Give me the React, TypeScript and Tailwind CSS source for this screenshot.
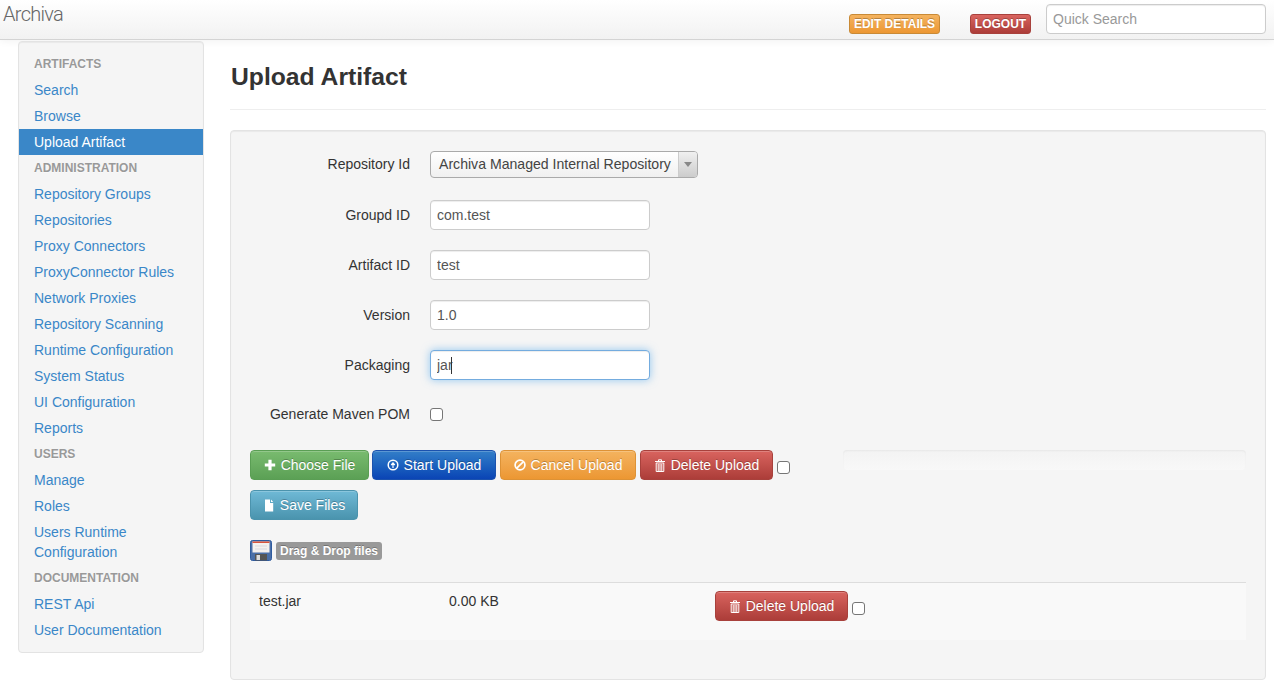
import React from "react";

type NavEntry = { h?: string; l?: string; active?: boolean };
const nav: NavEntry[] = [
  { h: "ARTIFACTS" },
  { l: "Search" },
  { l: "Browse" },
  { l: "Upload Artifact", active: true },
  { h: "ADMINISTRATION" },
  { l: "Repository Groups" },
  { l: "Repositories" },
  { l: "Proxy Connectors" },
  { l: "ProxyConnector Rules" },
  { l: "Network Proxies" },
  { l: "Repository Scanning" },
  { l: "Runtime Configuration" },
  { l: "System Status" },
  { l: "UI Configuration" },
  { l: "Reports" },
  { h: "USERS" },
  { l: "Manage" },
  { l: "Roles" },
  { l: "Users Runtime Configuration" },
  { h: "DOCUMENTATION" },
  { l: "REST Api" },
  { l: "User Documentation" },
];

const Plus = () => (
  <svg width="12" height="12" viewBox="0 0 12 12" fill="#fff"><path d="M4.4 .8h3.2v3.6h3.6v3.2H7.6v3.6H4.4V7.6H.8V4.4h3.6z" /></svg>
);
const Upload = () => (
  <svg width="12" height="12" viewBox="0 0 12 12" fill="none" stroke="#fff"><circle cx="6" cy="6" r="4.8" strokeWidth="1.5" /><path d="M6 9V4.2M4.2 6L6 4l1.8 2" strokeWidth="1.2" /></svg>
);
const Ban = () => (
  <svg width="12" height="12" viewBox="0 0 12 12" fill="none" stroke="#fff" strokeWidth="1.7"><circle cx="6" cy="6" r="4.9" /><path d="M2.8 9.2l6.4-6.4" /></svg>
);
const Trash = () => (
  <svg width="12" height="13" viewBox="0 0 12 13" fill="none" stroke="#fff" strokeWidth="1"><path d="M1 2.5h10M4.5 2V.8h3V2" /><path d="M2.2 4h7.6v8.5H2.2zM4.2 5v7M6 5v7M7.8 5v7" /></svg>
);
const FileIcon = () => (
  <svg width="12" height="13" viewBox="0 0 12 13" fill="#fff"><path d="M2 .5h5v3.5h3.2v8.5H2zM8 .5l2.2 2.6H8z" /></svg>
);

function Btn({ icon, label, cls }: { icon: React.ReactNode; label: string; cls: string }) {
  return (
    <button className={`flex items-center justify-center h-[30px] gap-[5px] rounded-[4px] border text-[14px] text-white [text-shadow:0_-1px_0_rgba(0,0,0,0.25)] shadow-[inset_0_1px_0_rgba(255,255,255,0.2)] ${cls}`}>
      {icon}
      <span>{label}</span>
    </button>
  );
}
const red = "w-[133px] bg-gradient-to-b from-[#d9645f] to-[#ac3d39] border-[#a8413c]";

function Check({ cls = "" }: { cls?: string }) {
  return <span className={`block w-[13px] h-[13px] bg-white rounded-[3px] border border-[#767676] ${cls}`} />;
}

function Field({ label, value, focus }: { label: string; value: string; focus?: boolean }) {
  return (
    <div className="flex items-center h-[30px] mb-[20px]">
      <label className="w-[160px] text-right text-[14px] text-[#333]">{label}</label>
      <div className="relative ml-[20px]">
        <input
          readOnly
          value={value}
          className={`block w-[220px] h-[30px] px-[6px] rounded-[4px] border bg-white text-[14px] text-[#555] outline-none ${
            focus
              ? "border-[#74acdf] shadow-[inset_0_1px_1px_rgba(0,0,0,0.075),0_0_8px_rgba(82,168,236,0.6)]"
              : "border-[#ccc] shadow-[inset_0_1px_1px_rgba(0,0,0,0.075)]"
          }`}
        />
        {focus && <span className="absolute left-[21px] top-[7px] w-px h-[17px] bg-[#333]" />}
      </div>
    </div>
  );
}

export default function App() {
  return (
    <div className="w-[1274px] h-[689px] overflow-hidden bg-white text-[#333] text-[14px] font-['Liberation_Sans',Arial,sans-serif]">
      <header className="flex items-start h-[40px] border-b border-[#d4d4d4] bg-gradient-to-b from-white to-[#f2f2f2] shadow-[0_1px_8px_rgba(0,0,0,0.06)]">
        <span className="ml-[3px] mt-[1px] text-[20px] leading-[26px] tracking-[-0.7px] font-light text-[#666] font-['Roboto',sans-serif]">Archiva</span>
        <div className="ml-auto mr-[8px] flex items-start">
          <span className="mt-[14px] h-[20px] w-[91px] flex items-center justify-center rounded-[3px] border border-[#c98a36] bg-gradient-to-b from-[#f4b35e] to-[#ec9732] text-[12px] font-bold text-white [text-shadow:0_-1px_0_rgba(0,0,0,0.25)]">EDIT DETAILS</span>
          <span className="mt-[14px] ml-[30px] h-[20px] w-[61px] flex items-center justify-center rounded-[3px] border border-[#a8413c] bg-gradient-to-b from-[#d9645f] to-[#ac3d39] text-[12px] font-bold text-white [text-shadow:0_-1px_0_rgba(0,0,0,0.25)]">LOGOUT</span>
          <input
            readOnly
            placeholder="Quick Search"
            className="mt-[4px] ml-[15px] w-[220px] h-[30px] px-[6px] rounded-[4px] border border-[#ccc] bg-white text-[14px] outline-none placeholder:text-[#999] shadow-[inset_0_1px_1px_rgba(0,0,0,0.075)]"
          />
        </div>
      </header>

      <div className="flex items-start pl-[18px] pr-[8px]">
        <aside className="w-[186px] mt-[1px] pt-[9px] pb-[9px] rounded-[4px] border border-[#e3e3e3] bg-[#f5f5f5] shadow-[inset_0_1px_1px_rgba(0,0,0,0.05)]">
          {nav.map((n, i) =>
            n.h ? (
              <div key={i} className="px-[15px] h-[26px] flex items-center text-[12px] font-bold text-[#999] [text-shadow:0_1px_0_rgba(255,255,255,0.5)]">{n.h}</div>
            ) : (
              <div
                key={i}
                className={`px-[15px] py-[3px] leading-[20px] ${n.active ? "bg-[#3a87c8] text-white" : "text-[#3a87c8]"}`}
              >
                {n.l}
              </div>
            )
          )}
        </aside>

        <main className="flex-1 ml-[26px]">
          <h1 className="mt-[21px] pl-[1px] h-[32px] leading-[32px] text-[24.7px] font-bold text-[#333]">Upload Artifact</h1>
          <div className="mt-[16px] border-t border-[#eee]" />
          <section className="mt-[20px] h-[550px] rounded-[4px] border border-[#e3e3e3] bg-[#f5f5f5] px-[19px] pt-[19px] shadow-[inset_0_1px_1px_rgba(0,0,0,0.05)]">
            <div className="flex items-start h-[30px] mb-[20px] pt-[1px]">
              <label className="w-[160px] text-right leading-[26px]">Repository Id</label>
              <div className="ml-[20px] flex w-[268px] h-[27px] rounded-[4px] border border-[#aaa] bg-gradient-to-b from-white to-[#f0f0f0] overflow-hidden">
                <span className="flex-1 pl-[8px] leading-[25px] text-[14.1px] text-[#444] whitespace-nowrap">Archiva Managed Internal Repository</span>
                <span className="w-[19px] border-l border-[#ccc] bg-gradient-to-b from-[#f0f0f0] to-[#ccc] flex items-center justify-center">
                  <span className="block w-0 h-0 border-x-[4px] border-x-transparent border-t-[5px] border-t-[#888]" />
                </span>
              </div>
            </div>
            <Field label="Groupd ID" value="com.test" />
            <Field label="Artifact ID" value="test" />
            <Field label="Version" value="1.0" />
            <Field label="Packaging" value="jar" focus />
            <div className="flex items-center h-[28px] mb-[22px]">
              <label className="w-[160px] text-right">Generate Maven POM</label>
              <Check cls="ml-[20px]" />
            </div>

            <div className="flex items-start">
              <div className="w-[593px] flex flex-col gap-[10px]">
                <div className="flex items-start">
                  <Btn icon={<Plus />} label="Choose File" cls="w-[119px] bg-gradient-to-b from-[#79bb6f] to-[#5ba055] border-[#5a9e54]" />
                  <span className="w-[3px]" />
                  <Btn icon={<Upload />} label="Start Upload" cls="w-[124px] bg-gradient-to-b from-[#337ec8] to-[#0b44b5] border-[#1b52ae]" />
                  <span className="w-[4px]" />
                  <Btn icon={<Ban />} label="Cancel Upload" cls="w-[136px] bg-gradient-to-b from-[#f4b35e] to-[#ec9732] border-[#dd9236]" />
                  <span className="w-[4px]" />
                  <Btn icon={<Trash />} label="Delete Upload" cls={red} />
                  <Check cls="ml-[4px] mt-[11px]" />
                </div>
                <Btn icon={<FileIcon />} label="Save Files" cls="w-[108px] bg-gradient-to-b from-[#6fb9d6] to-[#4a94ae] border-[#4b93ad]" />
              </div>
              <div className="flex-1 h-[20px] rounded-[4px] bg-gradient-to-b from-[#f3f3f3] to-[#f8f8f8] shadow-[inset_0_1px_2px_rgba(0,0,0,0.05)]" />
            </div>

            <div className="mt-[20px] flex items-center h-[22px]">
              <svg width="22" height="22" viewBox="0 0 22 22">
                <rect x="0.5" y="0.5" width="21" height="20" rx="2" fill="#4a6fa8" stroke="#2f5b9e" />
                <rect x="2.5" y="1.5" width="17" height="11" fill="#f4f0ee" />
                <rect x="2.5" y="1.5" width="17" height="1.5" fill="#d9533c" />
                <path d="M5 6h12M5 9h12" stroke="#d8d8e0" />
                <rect x="5" y="14" width="12" height="6.5" fill="#555" />
                <rect x="6.5" y="15" width="3.5" height="5" fill="#ddd" />
              </svg>
              <span className="ml-[4px] h-[18px] px-[4px] flex items-center rounded-[3px] bg-[#999] text-[12px] font-bold text-white [text-shadow:0_-1px_0_rgba(0,0,0,0.25)]">Drag &amp; Drop files</span>
            </div>

            <div className="mt-[20px] h-[58px] flex items-start border-t border-[#ddd] bg-[#f9f9f9] pl-[9px]">
              <span className="w-[190px] mt-[8px] leading-[20px]">test.jar</span>
              <span className="w-[266px] mt-[8px] leading-[20px]">0.00 KB</span>
              <Btn icon={<Trash />} label="Delete Upload" cls={`${red} mt-[8px]`} />
              <Check cls="ml-[4px] mt-[19px]" />
            </div>
          </section>
        </main>
      </div>
    </div>
  );
}
